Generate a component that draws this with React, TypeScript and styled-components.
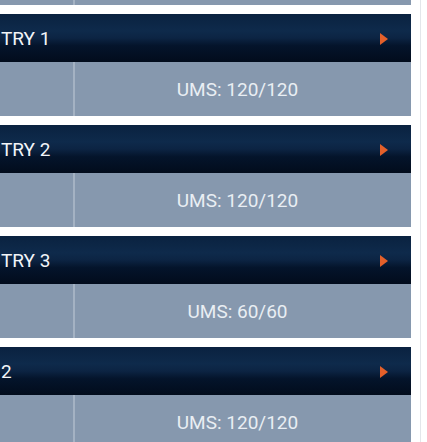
import styled, { createGlobalStyle } from "styled-components";

const Global = createGlobalStyle`
  html, body {
    margin: 0;
    padding: 0;
    background: #ffffff;
    font-family: Roboto, "Liberation Sans", sans-serif;
    overflow: hidden;
  }
`;

const Page = styled.div`
  display: flex;
  width: 427px;
  height: 442px;
  overflow: hidden;
`;

const Column = styled.div`
  width: 411px;
  display: flex;
  flex-direction: column;
  gap: 9px;
  margin-top: -49px;
`;

const Edge = styled.div`
  flex: 1;
  border-right: 1px solid #e3e6ea;
  margin-right: 6px;
`;

const Block = styled.div`
  display: flex;
  flex-direction: column;
`;

const Header = styled.div`
  height: 48px;
  display: flex;
  align-items: center;
  justify-content: space-between;
  padding: 0 23px 0 1px;
  background: linear-gradient(
    180deg,
    #0a2240 0%,
    #0e2a4b 35%,
    #0c2443 50%,
    #04142b 66%,
    #020c1c 100%
  );
  color: #f2f5f8;
  font-size: 19px;
`;

const Arrow = styled.span`
  width: 0;
  height: 0;
  border-top: 6px solid transparent;
  border-bottom: 6px solid transparent;
  border-left: 8px solid #e4602a;
  margin-top: 1px;
`;

const Body = styled.div`
  height: 54px;
  display: flex;
  background: #8698ae;
`;

const Label = styled.div`
  width: 73px;
  border-right: 2px solid #a4b2c3;
`;

const Value = styled.div`
  flex: 1;
  display: flex;
  align-items: center;
  justify-content: center;
  padding-right: 11px;
  color: #e9eef3;
  font-size: 19px;
`;

const entries = [
  { title: null, ums: "UMS: 120/120" },
  { title: "TRY 1", ums: "UMS: 120/120" },
  { title: "TRY 2", ums: "UMS: 120/120" },
  { title: "TRY 3", ums: "UMS: 60/60" },
  { title: "2", ums: "UMS: 120/120" },
];

export default function App() {
  return (
    <Page>
      <Global />
      <Column>
        {entries.map((e, i) => (
          <Block key={i}>
            {e.title !== null && (
              <Header>
                <span>{e.title}</span>
                <Arrow />
              </Header>
            )}
            <Body>
              <Label />
              <Value>{e.title !== null ? e.ums : ""}</Value>
            </Body>
          </Block>
        ))}
      </Column>
      <Edge />
    </Page>
  );
}
